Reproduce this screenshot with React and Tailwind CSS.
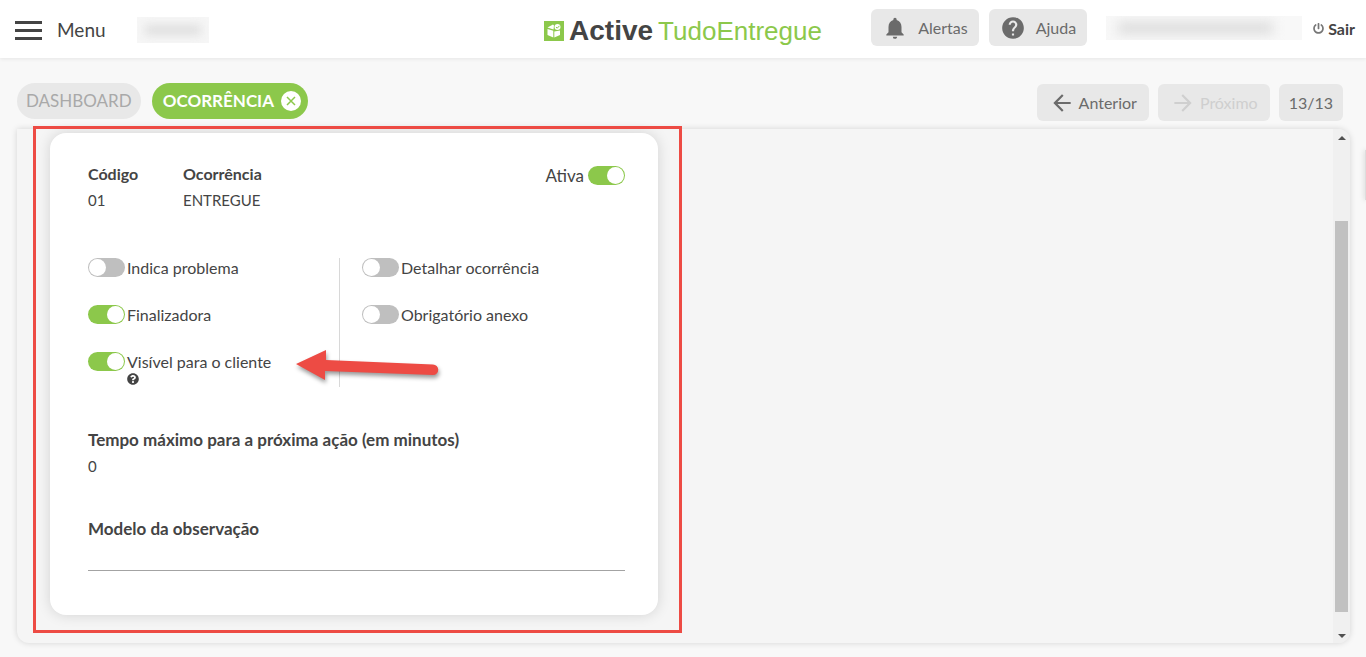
import React, { useState } from 'react';
import { MdArrowBack, MdArrowForward, MdHelp, MdNotifications } from 'react-icons/md';
import { FaPowerOff, FaQuestionCircle } from 'react-icons/fa';

function Toggle({ label, checked, onChange, reverse = false, children }) {
  return (
    <div>
      <label
        className={
          reverse
            ? 'flex h-[19px] flex-row-reverse items-center gap-1 text-[17px] whitespace-nowrap'
            : 'flex h-[19px] items-center gap-[2px] text-[16px] whitespace-nowrap'
        }
      >
        <input
          type="checkbox"
          checked={checked}
          onChange={onChange}
          className="flex h-[19px] w-[37px] shrink-0 appearance-none items-center rounded-full bg-[#bfbfbf] px-px before:block before:size-[17px] before:rounded-full before:bg-white checked:justify-end checked:bg-[#8cc84b]"
        />
        {label}
      </label>
      {children}
    </div>
  );
}

function Logo() {
  return (
    <a href="#" className="flex items-center gap-[5px] pt-1 font-['Liberation_Sans',sans-serif] leading-8 whitespace-nowrap">
      <svg viewBox="0 0 20 20" className="size-5">
        <rect width="20" height="20" fill="#8cc84b" />
        <path d="M3.500 6.500 9 3.500 10 4.500 9.500 8.500z" fill="#fff" />
        <path d="M3.500 8 9.300 9.800V16.500L3.500 14z" fill="#fff" />
        <path d="M10.300 10.500 16 9.500V14L10.300 16.500z" fill="#fff" />
        <circle cx="13.5" cy="6" r="3" fill="#fff" />
        <path d="m12 6 1.200 1.200L15.500 4.800" fill="none" stroke="#8cc84b" />
      </svg>
      <span className="text-[28px] font-bold text-[#444]">Active</span>
      <span className="text-[26px] text-[#8cc84b]">TudoEntregue</span>
    </a>
  );
}

function Header() {
  return (
    <header className="grid h-[58px] grid-cols-[1fr_auto_1fr] items-center bg-white px-[11px] shadow-[0_1px_4px_rgba(0,0,0,0.08)]">
      <div className="flex items-center pt-[2px] pl-1">
        <button type="button" className="flex items-center gap-[15px] text-[19px]">
          <span className="flex w-[27px] flex-col gap-[5px]">
            <span className="h-[3px] bg-[#444]" />
            <span className="h-[3px] bg-[#444]" />
            <span className="h-[3px] bg-[#444]" />
          </span>
          Menu
        </button>
        <div className="ml-[31px] h-[26px] w-[72px] overflow-hidden bg-[#f6f6f6] p-2">
          <div className="h-full bg-[#dedede] blur-[5px]" />
        </div>
      </div>
      <Logo />
      <div className="flex items-center justify-end pb-[3px]">
        <button type="button" className="flex h-[37px] items-center gap-[10px] rounded-md bg-[#e8e8e8] px-[11px] text-[16px] text-[#6b6b6b]">
          <MdNotifications size={26} />
          Alertas
        </button>
        <button type="button" className="ml-[10px] flex h-[37px] items-center gap-[10px] rounded-md bg-[#e8e8e8] px-[11px] text-[16px] text-[#6b6b6b]">
          <MdHelp size={26} />
          Ajuda
        </button>
        <div className="ml-[19px] h-6 w-[196px] overflow-hidden bg-[#f8f8f8] px-3 py-[6px]">
          <div className="h-full w-[155px] bg-[#dcdcdc] blur-[6px]" />
        </div>
        <a href="#" className="ml-[11px] flex items-center gap-1 pt-[2px] text-[16px] font-bold">
          <FaPowerOff size={11} className="text-[#777]" />
          Sair
        </a>
      </div>
    </header>
  );
}

function Toolbar() {
  return (
    <div className="flex items-end justify-between pt-[25px] pr-[23px] pb-2 pl-[17px]">
      <nav className="flex gap-[11px] pb-[2px] text-[17px] leading-8">
        <a href="#" className="flex h-9 items-center rounded-full bg-[#e8e8e8] px-[9px] text-[#a9a9a9]">
          DASHBOARD
        </a>
        <div className="flex h-9 items-center gap-[7px] rounded-full bg-[#8cc84b] pr-[7px] pl-[11px] font-bold text-white">
          OCORRÊNCIA
          <button type="button" aria-label="Fechar" className="flex size-5 items-center justify-center rounded-full bg-white">
            <svg viewBox="0 0 10 10" className="size-[10px]">
              <path d="M1 1 9 9M9 1 1 9" stroke="#8cc84b" strokeWidth="1.5" />
            </svg>
          </button>
        </div>
      </nav>
      <div className="flex text-[16px] text-[#6b6b6b]">
        <button type="button" className="flex h-[37px] items-center gap-1 rounded-md bg-[#e8e8e8] px-3">
          <MdArrowBack size={26} />
          Anterior
        </button>
        <button type="button" disabled className="ml-[9px] flex h-[37px] items-center gap-1 rounded-md bg-[#e8e8e8] px-3 text-[#cfcfcf]">
          <MdArrowForward size={26} />
          Próximo
        </button>
        <span className="ml-[9px] flex h-[37px] items-center rounded-md bg-[#e8e8e8] px-[10px]">13/13</span>
      </div>
    </div>
  );
}

// Red frame and arrow drawn over the card
function Highlight() {
  return (
    <div className="pointer-events-none absolute -top-[7px] -right-6 -bottom-[18px] -left-[17px] border-3 border-[#ed4b44]">
      <svg viewBox="0 0 150 40" className="absolute top-[217px] left-[256px] h-10 w-[150px] drop-shadow-[1px_3px_2px_rgba(0,0,0,0.4)]">
        <path d="M4 18 34 4V14L141 18.500A5.200 5.200 0 0 1 141 29L33 25V34z" fill="#ed4b44" />
      </svg>
    </div>
  );
}

function OccurrenceCard() {
  const [flags, setFlags] = useState({
    ativa: true,
    problema: false,
    finalizadora: true,
    visivel: true,
    detalhar: false,
    anexo: false,
  });

  const bind = (name) => ({
    checked: flags[name],
    onChange: (e) => setFlags({ ...flags, [name]: e.target.checked }),
  });

  return (
    <div className="relative w-full max-w-[608px]">
      <div className="rounded-2xl bg-white pt-[27px] pr-[33px] pb-11 pl-[38px] text-[15px] leading-[27px] shadow-[0_0_14px_rgba(0,0,0,0.14)]">
        <div className="flex">
          <div className="w-[95px]">
            <p className="text-[16px] font-bold">Código</p>
            <p>01</p>
          </div>
          <div>
            <p className="text-[16px] font-bold">Ocorrência</p>
            <p>ENTREGUE</p>
          </div>
          <div className="ml-auto pt-[6px]">
            <Toggle label="Ativa" reverse {...bind('ativa')} />
          </div>
        </div>

        <div className="mt-[44px] flex">
          <div className="flex min-h-[129px] w-[252px] flex-col gap-7 border-r border-[#d8d8d8]">
            <Toggle label="Indica problema" {...bind('problema')} />
            <Toggle label="Finalizadora" {...bind('finalizadora')} />
            <Toggle label="Visível para o cliente" {...bind('visivel')}>
              <FaQuestionCircle size={12} className="mt-[2px] ml-[39px]" />
            </Toggle>
          </div>
          <div className="flex flex-col gap-7 pl-[22px]">
            <Toggle label="Detalhar ocorrência" {...bind('detalhar')} />
            <Toggle label="Obrigatório anexo" {...bind('anexo')} />
          </div>
        </div>

        <p className="mt-[39px] text-[17px] font-bold">Tempo máximo para a próxima ação (em minutos)</p>
        <p>0</p>

        <label htmlFor="modelo" className="mt-[35px] block text-[17px] font-bold">
          Modelo da observação
        </label>
        <input id="modelo" type="text" className="block h-[29px] w-full border-b border-[#a3a3a3] outline-none" />
      </div>
      <Highlight />
    </div>
  );
}

function Scrollbar() {
  return (
    <div className="flex w-[17px] shrink-0 flex-col items-center bg-[#f0f0f0] pt-[7px] pb-[5px]">
      <svg viewBox="0 0 8 4" className="h-1 w-2">
        <path d="M0 4 4 0 8 4z" fill="#505050" />
      </svg>
      <div className="mt-[81px] mb-[22px] w-[13px] flex-1 bg-[#c1c1c1]" />
      <svg viewBox="0 0 8 4" className="h-1 w-2">
        <path d="M0 0 4 4 8 0z" fill="#505050" />
      </svg>
    </div>
  );
}

function App() {
  return (
    <div className="flex min-h-screen flex-col overflow-x-hidden bg-[#f8f8f8] font-[Lato,sans-serif] text-[#444]">
      <Header />
      <Toolbar />
      <main className="mr-4 mb-[14px] ml-[17px] flex flex-1 rounded-r-xl rounded-bl-xl bg-[#f5f5f5] shadow-[0_0_6px_rgba(0,0,0,0.15)]">
        <div className="flex-1 pt-1 pb-7 pl-[33px]">
          <OccurrenceCard />
        </div>
        <div className="flex overflow-hidden rounded-r-xl">
          <Scrollbar />
        </div>
      </main>
      <div className="absolute top-[150px] right-0 h-[50px] w-px bg-[#ddd] shadow-[0_0_5px_rgba(0,0,0,0.4)]" />
    </div>
  );
}

export default App;
